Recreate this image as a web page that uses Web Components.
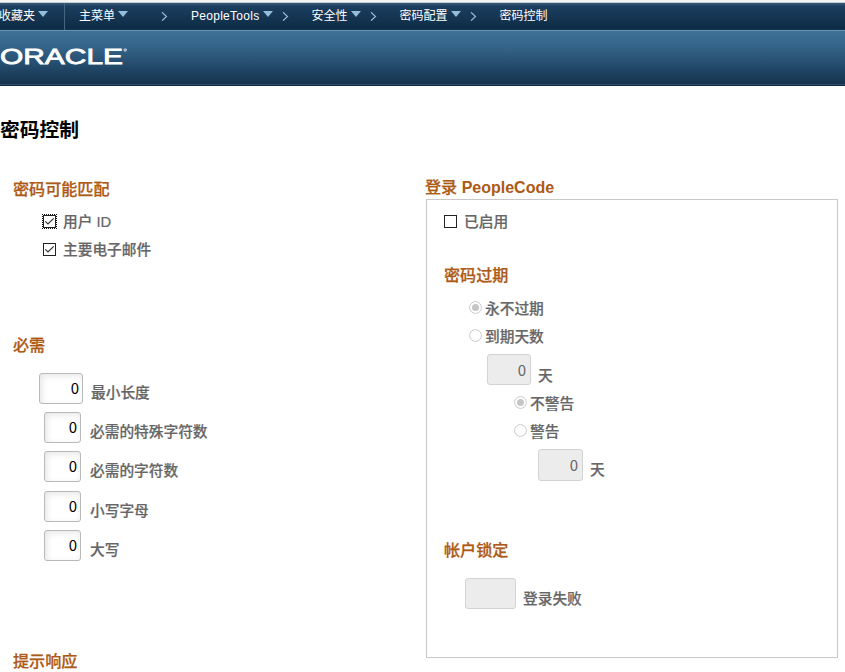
<!DOCTYPE html>
<html lang="zh-CN">
<head>
<meta charset="utf-8">
<title>密码控制</title>
<style>
html,body{margin:0;height:672px;overflow:hidden;background:#fff}
body{font-family:"Liberation Sans","Noto Sans CJK SC",sans-serif}
</style>
</head>
<body>
<password-page></password-page>
<script>
const define = (name, html, setup) => {
  const t = document.createElement('template');
  t.innerHTML = html;
  customElements.define(name, class extends HTMLElement {
    constructor() {
      super();
      this.attachShadow({mode: 'open'}).append(t.content.cloneNode(true));
    }
    connectedCallback() { if (setup) setup(this, this.shadowRoot); }
  });
};

define('nav-crumb', `<style>
:host{display:flex;align-items:center;height:27px;box-sizing:border-box;padding-bottom:1px;font-size:12px;line-height:18px;color:#fff;white-space:nowrap}
.t{width:0;height:0;border:5px solid transparent;border-top:6px solid #94bddb;border-bottom:0;margin:-4px 0 0 3px}
:host([leaf]) .t{display:none}
</style><slot></slot><span class="t"></span>`);

define('nav-arrow', `<style>:host{display:block;width:7px;height:9px}svg{display:block}</style>
<svg width="7" height="9" viewBox="0 0 7 9"><path d="M1 .3 5.5 4.5 1 8.7" fill="none" stroke="#94bddb" stroke-width="1.2"/></svg>`);

define('nav-bar', `<style>
:host{display:flex;align-items:center;height:30px;box-sizing:border-box;padding-top:3px;background:linear-gradient(#f4f4f4 0 2px,#c9cdd0 2px 3px,#315774 3px 4px,#1c3f5f 6px,#0d2b45 29px,#1d405b 30px)}
.s{width:1px;height:27px;background:#456780;margin:0 14px 0 16px}
</style>
<nav-crumb style="margin-left:-1px">收藏夹</nav-crumb><span class="s"></span>
<nav-crumb>主菜单</nav-crumb><nav-arrow style="margin-left:33px"></nav-arrow>
<nav-crumb style="margin-left:23px"><span style="letter-spacing:.28px">PeopleTools</span></nav-crumb><nav-arrow style="margin-left:9px"></nav-arrow>
<nav-crumb style="margin-left:23px">安全性</nav-crumb><nav-arrow style="margin-left:9px"></nav-arrow>
<nav-crumb style="margin-left:23px">密码配置</nav-crumb><nav-arrow style="margin-left:9px"></nav-arrow>
<nav-crumb leaf style="margin-left:23px">密码控制</nav-crumb>`);

define('brand-bar', `<style>
:host{display:block;height:56px;background:linear-gradient(#6790ab 0 1px,#3f7198 1px,#356489 17px,#204666 39px,#17344f 54px,#31516b 54px 55px,#102d46 55px)}
svg{display:block;overflow:visible}text{font-family:"Liberation Sans",sans-serif;fill:#fff}
</style>
<svg width="140" height="56"><text x="0" y="34" font-size="22" textLength="123" lengthAdjust="spacingAndGlyphs" stroke="#fff" stroke-width=".8">ORACLE</text><circle cx="125.2" cy="20" r="1.3" fill="#7e9db5" stroke="#cbd9e4" stroke-width=".8"/></svg>`);

define('section-heading', `<style>
:host{display:block;height:30px;line-height:30px;font-size:16.1px;font-weight:700;color:#ad5a16;white-space:nowrap}
.c{font-weight:500;-webkit-text-stroke:.25px #ad5a16}
b{font-size:16px}
</style><span class="c"><slot></slot></span><b><slot name="latin"></slot></b>`);

define('check-row', `<style>
:host{display:flex;align-items:center;height:28px;font-size:14.7px;font-weight:500;line-height:28px;color:#666;white-space:nowrap;-webkit-text-stroke:.2px #666}
svg{display:block;flex:none;margin:-2px 6px 0 0}.f,.m{display:none}
:host([checked]) .m{display:block}:host([focused]) .f{display:block}
</style><svg width="15" height="15" viewBox="0 0 15 15"><rect x="1.5" y="1.5" width="12" height="12" fill="#fff" stroke="#222"/><path class="m" d="M3.3 7.3 6 10 11.7 4.3" fill="none" stroke="#333" stroke-width="1.2"/><path class="f" d="M0 .5H15M0 14.5H15M.5 0V15M14.5 0V15" fill="none" stroke="#111" stroke-dasharray="1 1"/></svg><span><slot></slot></span>`);

define('radio-row', `<style>
:host{display:flex;align-items:center;height:28px;font-size:14.7px;font-weight:500;line-height:28px;color:#666;white-space:nowrap;-webkit-text-stroke:.2px #666}
svg{display:block;flex:none;margin:-1px 3px 0 0}.d{display:none}:host([checked]) .d{display:block}
</style><svg width="13" height="13" viewBox="0 0 13 13"><circle cx="6.5" cy="6.5" r="5.9" fill="#fff" stroke="#c9c9c9"/><circle class="d" cx="6.5" cy="6.5" r="3.5" fill="#c5c5c5"/></svg><span style="padding-top:2px"><slot></slot></span>`);

define('number-row', `<style>
:host{display:flex;height:31px;font-size:14.7px;font-weight:500;line-height:31px;color:#666;white-space:nowrap}
.b{flex:none;width:var(--w,37px);height:100%;box-sizing:border-box;border:1px solid #b9b9b9;border-radius:3px;background:#fff;box-shadow:inset 2px 2px 6px #e6e6e6;padding-right:3px;text-align:right;font-family:"Noto Sans CJK SC",sans-serif;font-size:15px;font-weight:400;line-height:28px;color:#000}
:host([off]) .b{background:#ececec;border-color:#d3d3d3;box-shadow:none;color:#666;padding-right:4px;line-height:29px}
.l{padding-top:5px;margin-left:var(--g,9px);-webkit-text-stroke:.2px #666}
:host([off]) .l{padding-top:6px}
</style><span class="b"></span><span class="l"><slot></slot></span>`,
(host, root) => { root.querySelector('.b').textContent = host.getAttribute('value') || ''; });

define('password-page', `<style>
:host{display:block;height:672px;overflow:hidden}
h1{margin:0;height:88px;line-height:88px;font-size:19.8px;font-weight:700;color:#000}
main{display:grid;grid-template-columns:425px 413px}
.left{padding-left:13px}
.box{margin-left:1px;width:412px;height:459px;box-sizing:border-box;border:1px solid #c8c8c8;padding:8px 0 0 17px}
</style>
<nav-bar></nav-bar><brand-bar></brand-bar>
<h1>密码控制</h1>
<main><section class="left">
<section-heading style="line-height:31px">密码可能匹配</section-heading>
<check-row checked focused style="margin:4px 0 0 29px">用户 ID</check-row>
<check-row checked style="margin-left:29px">主要电子邮件</check-row>
<section-heading style="margin-top:66px">必需</section-heading>
<number-row value="0" style="--w:44px;--g:8px;margin:13px 0 0 26px">最小长度</number-row>
<number-row value="0" style="margin:8px 0 0 31px">必需的特殊字符数</number-row>
<number-row value="0" style="margin:8px 0 0 31px">必需的字符数</number-row>
<number-row value="0" style="margin:9px 0 0 31px">小写字母</number-row>
<number-row value="0" style="margin:8px 0 0 31px">大写</number-row>
<section-heading style="margin-top:85px">提示响应</section-heading>
</section><section>
<section-heading style="height:25px;line-height:27px">登录<span slot="latin">&nbsp;PeopleCode</span></section-heading>
<div class="box">
<check-row style="margin-left:-1px">已启用</check-row>
<section-heading style="margin-top:24px">密码过期</section-heading>
<radio-row checked style="margin:4px 0 0 25px">永不过期</radio-row>
<radio-row style="margin-left:25px">到期天数</radio-row>
<number-row off value="0" style="--w:44px;--g:7px;margin:4px 0 0 43px"><span style="position:relative;top:1px">天</span></number-row>
<radio-row checked style="margin:4px 0 0 70px">不警告</radio-row>
<radio-row style="margin-left:70px">警告</radio-row>
<number-row off value="0" style="--w:45px;--g:7px;height:32px;margin:4px 0 0 94px">天</number-row>
<section-heading style="margin-top:54px">帐户锁定</section-heading>
<number-row off style="--w:51px;--g:7px;margin:13px 0 0 21px">登录失败</number-row>
</div></section></main>`);
</script>
</body>
</html>
